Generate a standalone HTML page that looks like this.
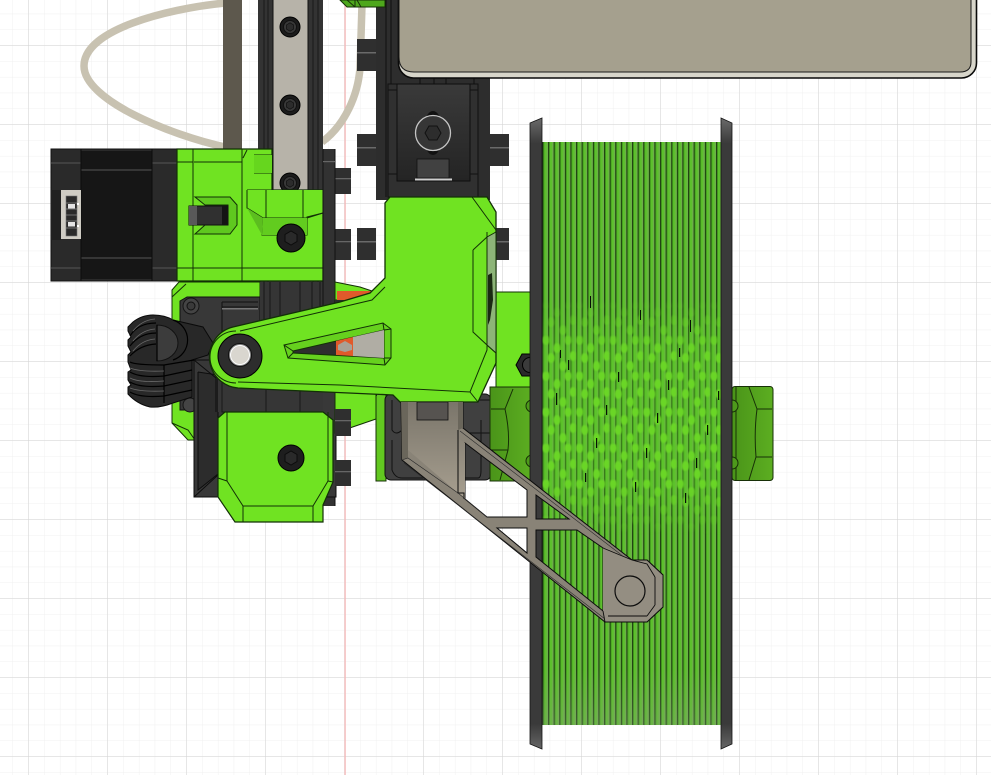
<!DOCTYPE html>
<html><head><meta charset="utf-8"><title>CAD view</title>
<style>html,body{margin:0;padding:0;background:#fff;width:991px;height:775px;overflow:hidden}svg{display:block}</style>
</head><body>
<svg xmlns="http://www.w3.org/2000/svg" width="991" height="775" viewBox="0 0 991 775">
<defs>
<pattern id="gm" x="28.3" y="45.3" width="15.8" height="15.8" patternUnits="userSpaceOnUse"><path d="M0 0H15.8M0 0V15.8" stroke="#f0f0f0" stroke-width="1" fill="none"/></pattern>
<pattern id="gM" x="28.3" y="45.3" width="79" height="79" patternUnits="userSpaceOnUse"><path d="M0 0H79M0 0V79" stroke="#d4d4d4" stroke-width="1" fill="none"/></pattern>
<pattern id="sp" x="542.5" y="0" width="5.6" height="10" patternUnits="userSpaceOnUse">
<rect width="5.6" height="10" fill="#6cb148"/><rect x="0" width=".8" height="10" fill="#0a1a04"/><rect x=".8" width="1" height="10" fill="#3a9018"/><rect x="1.8" width="2.2" height="10" fill="#5cc02c"/></pattern>
<pattern id="spots" x="542" y="300" width="33.6" height="36" patternUnits="userSpaceOnUse">
<g fill="#6ad626"><ellipse cx="4" cy="4" rx="3.6" ry="5"/><ellipse cx="15" cy="12" rx="3.6" ry="5"/><ellipse cx="26" cy="4" rx="3.6" ry="5"/><ellipse cx="9" cy="22" rx="3.6" ry="5"/><ellipse cx="21" cy="30" rx="3.6" ry="5"/><ellipse cx="31" cy="20" rx="3.4" ry="5"/></g></pattern>
<linearGradient id="fade" x1="0" y1="0" x2="0" y2="1"><stop offset="0" stop-color="#000"/><stop offset=".22" stop-color="#fff"/><stop offset=".78" stop-color="#fff"/><stop offset="1" stop-color="#000"/></linearGradient>
<mask id="mk"><rect x="542" y="300" width="180" height="235" fill="url(#fade)"/></mask>
<filter id="bl" x="-5%" y="-5%" width="110%" height="110%"><feGaussianBlur stdDeviation=".9"/></filter>
<linearGradient id="fl" x1="0" y1="0" x2="0" y2="1"><stop offset="0" stop-color="#6b6b6b"/><stop offset=".04" stop-color="#3a3a3a"/><stop offset=".96" stop-color="#3a3a3a"/><stop offset="1" stop-color="#666"/></linearGradient>
<linearGradient id="pl" x1="0" y1="0" x2="0" y2="1"><stop offset="0" stop-color="#7a756a"/><stop offset="1" stop-color="#a79f90"/></linearGradient>
<linearGradient id="kn" x1="0" y1="0" x2="1" y2="0"><stop offset="0" stop-color="#4a9419"/><stop offset="1" stop-color="#5cae21"/></linearGradient>
<linearGradient id="mt" x1="0" y1="0" x2="0" y2="1"><stop offset="0" stop-color="#3a3a3a"/><stop offset="1" stop-color="#242424"/></linearGradient>
<linearGradient id="sb" x1="0" y1="0" x2="0" y2="1"><stop offset="0" stop-color="#8a9a80" stop-opacity="0"/><stop offset="1" stop-color="#8a9a80" stop-opacity=".3"/></linearGradient>
<g id="bolt"><circle r="10" fill="#1c1c1c" stroke="#000"/><circle r="6.5" fill="#383838" stroke="#111"/><path d="M-3.6-2 0-4.2 3.6-2V2L0 4.2-3.6 2Z" fill="#2c2c2c" stroke="#111" stroke-width=".7"/></g>
<g id="tab"><rect width="19" height="32" fill="#2f2f2f"/><rect y="13" width="19" height="1.5" fill="#6a6a6a"/></g>
</defs>

<!-- grid -->
<rect width="991" height="775" fill="#fff"/>
<rect width="991" height="775" fill="url(#gm)"/>
<rect width="991" height="775" fill="url(#gM)"/>
<rect x="344.5" y="0" width="1.2" height="775" fill="#f6b4b4"/>

<!-- tubes -->
<g fill="none" stroke="#c8c2b1" stroke-width="7.500">
<path d="M225 3C165 9 84 30 84 66C84 100 170 135 225 147"/>
<path d="M322 142C345 125 358 95 360 68L362 5"/>
</g>

<!-- tan column -->
<rect x="223" y="0" width="19" height="150" fill="#5d584d"/>

<!-- linear rail -->
<rect x="258" y="0" width="65" height="285" fill="#333"/>
<path d="M264 0V285M268 0V285M273 0V190M308 0V190M313 0V285M318 0V285" stroke="#181818" stroke-width="1" fill="none"/>
<rect x="273" y="0" width="35" height="192" fill="#b7b3a9"/>
<path d="M273 0V192M308 0V192" stroke="#111" stroke-width="1"/>
<use href="#bolt" x="290" y="27"/><use href="#bolt" x="290" y="105"/><use href="#bolt" x="290" y="183"/>

<!-- column 2 -->
<rect x="376" y="0" width="114" height="200" fill="#2d2d2d"/>
<path d="M386 0V197M391 0V84M478 84V197" stroke="#0e0e0e" stroke-width="1" fill="none"/>
<rect x="388" y="84" width="90" height="113" fill="#303030" stroke="#111"/>
<rect x="397" y="84" width="73" height="97" fill="url(#mt)" stroke="#0e0e0e"/>
<path d="M388 90H397M470 90H478M388 174H397M470 174H478" stroke="#111" fill="none"/>
<ellipse cx="433" cy="133" rx="10" ry="22" fill="#111"/>
<circle cx="433" cy="133" r="17.500" fill="#363636" stroke="#c4c4c4" stroke-width="1.300"/>
<path d="M425 133 429 126H437L441 133 437 140H429Z" fill="#2d2d2d" stroke="#111"/>
<rect x="417" y="159" width="32" height="19" fill="#414141" stroke="#111" stroke-width=".8"/>
<rect x="415" y="178.500" width="37" height="2" fill="#cfcfcf"/>
<path d="M420 78V84M434 78V84M446 78V84M474 78V84" stroke="#0e0e0e"/>

<!-- top green fragment -->
<path d="M340 0 347 7H385V0Z" fill="#4ea71c" stroke="#173007"/>
<path d="M347 0 355 7M355 7V0M361 7 357 0" stroke="#173007" fill="none"/>

<!-- panel -->
<rect x="398.500" y="-30" width="578" height="108" rx="15" fill="#d7d5ca" stroke="#0a0a0a" stroke-width="1.600"/>
<path d="M399-30V57Q399 72 414 72H960Q971 72 971 62V-30Z" fill="#a5a08e" stroke="#1a1a1a" stroke-width="1"/>

<!-- tabs -->
<use href="#tab" x="357" y="39"/><use href="#tab" x="357" y="134"/><use href="#tab" x="357" y="228"/>
<use href="#tab" x="490" y="134"/><use href="#tab" x="490" y="228"/>
<rect x="335" y="168" width="16" height="26" fill="#2f2f2f"/><rect x="335" y="178" width="16" height="1.300" fill="#666"/>
<rect x="335" y="229" width="16" height="31" fill="#2f2f2f"/><rect x="335" y="241" width="16" height="1.300" fill="#666"/>

<!-- green right lower parts behind spool -->
<rect x="496" y="292" width="36" height="96" fill="#70e322" stroke="#123006"/>
<path d="M516 365 522 354H534V376H522Z" fill="#2a2a2a" stroke="#000"/>
<circle cx="530" cy="365" r="7.500" fill="#3b3b3b" stroke="#000"/>

<!-- lower dark block + knobs -->
<rect x="376" y="394" width="10" height="87" fill="#62c820" stroke="#173007"/>
<rect x="385" y="394" width="106" height="86" rx="6" fill="#404040" stroke="#111"/>
<path d="M392 400V430Q396 436 402 430M392 440V470Q395 478 402 478H478Q481 478 481 470V420M470 400H490M470 433H490" stroke="#111" fill="none"/>
<rect x="490" y="387" width="42" height="94" fill="url(#kn)" stroke="#173007"/>
<path d="M513 389 505 409Q510 432 508 450L500 480M491 409H505M491 450H508" stroke="#173007" fill="none"/>
<path d="M532 400a6 6 0 0 0 0 12M532 455a6 6 0 0 0 0 12" fill="#4d9a1b" stroke="#173007"/>

<rect x="732" y="386.500" width="41" height="94" rx="3" fill="url(#kn)" stroke="#173007"/>
<path d="M736 386V481M749 387 757 409Q754 432 756 457L749 480M757 409H772M756 457H772" stroke="#173007" fill="none"/>
<path d="M732 400a6 6 0 0 1 0 12M732 457a6 6 0 0 1 0 12" fill="#4d9a1b" stroke="#173007"/>

<!-- spool -->
<rect x="542" y="142" width="180" height="583" fill="url(#sp)"/>
<rect x="542" y="300" width="180" height="235" fill="#5ec82a" opacity=".4" mask="url(#mk)"/>
<rect x="542" y="300" width="180" height="235" fill="url(#spots)" mask="url(#mk)" filter="url(#bl)"/>
<rect x="542" y="670" width="180" height="55" fill="url(#sb)"/>
<g fill="#061004">
<rect x="568" y="360" width="1.200" height="10"/><rect x="556" y="393" width="1.200" height="12"/><rect x="606" y="405" width="1.200" height="10"/><rect x="618" y="372" width="1.200" height="10"/><rect x="668" y="380" width="1.200" height="10"/><rect x="657" y="413" width="1.200" height="10"/><rect x="646" y="448" width="1.200" height="10"/><rect x="596" y="438" width="1.200" height="10"/><rect x="585" y="473" width="1.200" height="9"/><rect x="635" y="482" width="1.200" height="10"/><rect x="685" y="493" width="1.200" height="10"/><rect x="696" y="458" width="1.200" height="10"/><rect x="707" y="425" width="1.200" height="10"/><rect x="718" y="391" width="1.200" height="9"/><rect x="679" y="348" width="1.200" height="9"/>
<rect x="590" y="296" width="1" height="12"/><rect x="640" y="310" width="1" height="10"/><rect x="690" y="320" width="1" height="12"/><rect x="560" y="350" width="1" height="8"/>
</g>
<g fill="url(#fl)" stroke="#151515" stroke-width=".8">
<path d="M530 123 542 118V749L530 744Z"/>
<path d="M721 118 732 123V744L721 749Z"/>
</g>

<!-- motor -->
<rect x="51" y="149" width="126" height="132" fill="#2a2a2a" stroke="#111"/>
<rect x="81" y="151" width="71" height="128" fill="#161616"/>
<path d="M51 163H81M152 163H177M51 268H81M152 268H177M81 170H152M81 258H152" stroke="#555" stroke-width=".9" fill="none"/>
<path d="M81 149V281M152 149V281" stroke="#0c0c0c"/>
<rect x="61" y="190" width="20" height="49" fill="#cfccc4"/>
<rect x="51" y="190" width="10" height="50" fill="#202020"/>
<rect x="66" y="196" width="11" height="40" fill="#2a2a2a" stroke="#777" stroke-width=".6"/>
<path d="M66 203H77M66 209H77M66 215H77M66 221H77M66 228H77" stroke="#888" stroke-width=".7"/>
<rect x="68" y="204" width="7" height="4.500" fill="#e4e4e4"/><rect x="68" y="222" width="7" height="4.500" fill="#e4e4e4"/>
<rect x="77" y="203" width="2" height="2" fill="#fff"/><rect x="77" y="225" width="2" height="2" fill="#fff"/>

<!-- upper-left green block -->
<path d="M177 149H272V190H323V281H177Z" fill="#70e322" stroke="#123006" stroke-width="1.200"/>
<path d="M193 149V281M242 149V281M177 162H193M177 268H323M194 162H242M247 190H323M243 158 247 150M254 155H272M254 173H272" stroke="#123006" fill="none"/>
<rect x="254" y="155" width="18" height="18" fill="#66d61e"/>
<path d="M247 190V208L263 218H307L323 213V190" fill="#70e322" stroke="#123006"/>
<path d="M266 190V218M303 190V218" stroke="#123006"/>
<path d="M247 208 263 218 262 235H277L307 235 307 217 323 213" fill="none" stroke="#123006"/>
<path d="M247 208 263 218 262 235Z" fill="#5cbe1f"/>
<path d="M263 218H307V235H262Z" fill="#62cc1f"/>
<circle cx="291" cy="238" r="14" fill="#1e1e1e" stroke="#000"/>
<path d="M285 234.500 291 231 297 234.500V241.500L291 245 285 241.500Z" fill="#2a2a2a" stroke="#0c0c0c"/>
<path d="M195 197H230L237 205V225L230 234H195L205 225H228V205H205Z" fill="#5fc81f" stroke="#123006"/>
<rect x="189" y="206" width="39" height="19" fill="#303030" stroke="#111"/>
<rect x="189" y="206" width="8" height="19" fill="#595959"/>
<rect x="222" y="206" width="6" height="19" fill="#141414"/>

<!-- carriage -->
<path d="M172 290 179 282H260V300H182V410H195V440H188L172 423Z" fill="#70e322" stroke="#123006"/>
<path d="M172 297 186 284M172 423 188 430 195 440" stroke="#123006" fill="none"/>
<path d="M180 301 187 297H260V412H194V410H180Z" fill="#383838" stroke="#111"/>
<path d="M222 302V412H258M222 302H258M222 307H258" stroke="#111" fill="none"/>
<rect x="222" y="308" width="36" height="1.500" fill="#777"/>
<circle cx="191" cy="306" r="8" fill="#444" stroke="#151515"/><circle cx="191" cy="306" r="4" fill="#3a3a3a" stroke="#111"/>
<circle cx="190" cy="405" r="7" fill="#444" stroke="#151515"/>

<!-- rail lower lines -->
<rect x="260" y="282" width="63" height="130" fill="#353535"/>
<path d="M264 282V412M270 282V412M280 282V412M300 282V412M312 282V412M320 282V412" stroke="#181818" fill="none"/>
<rect x="323" y="149" width="12" height="357" fill="#323232"/>
<path d="M323 149V506M335 149V506" stroke="#111" fill="none"/>
<rect x="323" y="161" width="12" height="1.200" fill="#666"/>
<rect x="194" y="360" width="142" height="137" fill="#383838" stroke="#0d0d0d"/>
<path d="M198 372V490L218 474V375L198 372" fill="#2c2c2c" stroke="#0d0d0d"/>
<path d="M194 360 216 378V412M194 497 218 475" stroke="#0d0d0d" fill="none"/>
<rect x="218" y="378" width="105" height="34" fill="#363636"/>
<path d="M222 378V412H323M266 378V412M300 378V412" stroke="#181818" fill="none"/>

<!-- right side green below arm + orange -->
<path d="M335 282 360 287 378 293V300H335Z" fill="#70e322" stroke="#123006"/>
<path d="M337 291 373 291 371 302 337 310Z" fill="#e05a2b"/>
<rect x="335" y="300" width="42" height="96" fill="#2b2b2b"/>
<path d="M335 390H376V419L335 433Z" fill="#70e322" stroke="#123006"/>

<!-- bottom tabs -->
<rect x="335" y="409" width="16" height="27" fill="#2f2f2f"/><rect x="335" y="420" width="16" height="1.300" fill="#666"/>
<rect x="335" y="460" width="16" height="26" fill="#2f2f2f"/><rect x="335" y="471" width="16" height="1.300" fill="#666"/>

<!-- bottom green block -->
<path d="M218 418 225 412H323L333 420V482L323 505V522H235L218 497Z" fill="#70e322" stroke="#123006" stroke-width="1.200"/>
<path d="M227 412V481L243 506V522M227 481 218 478M328 412V481L313 506V522M243 506H313M328 481 333 482" stroke="#123006" fill="none"/>
<circle cx="291" cy="458" r="13" fill="#1e1e1e" stroke="#000"/>
<path d="M285 454.500 291 451 297 454.500V461.500L291 465 285 461.500Z" fill="#2a2a2a" stroke="#0c0c0c"/>

<!-- clip -->
<path d="M128 327 133 322Q142 315 153 315 165 315 173 320L203 327 213 343 208 355 192 360V397L173 403Q160 408 150 407 137 404 128 394V387L131 385 128 380V372L131 370 128 362V355L131 352 128 346V340L131 337 128 331Z" fill="#282828" stroke="#0a0a0a"/>
<path d="M157 325A21 18 0 0 1 157 361Z" fill="#3c3c3c" stroke="#111"/>
<g fill="none" stroke="#000" stroke-width="1.200">
<path d="M130 336Q138 323 156 323M130 346Q140 333 156 333M130 356Q140 345 156 344"/>
<path d="M130 362Q135 365 164 365L194 360M130 372Q140 378 164 376L192 370M130 382Q140 388 164 386L192 380M130 392Q140 398 164 396L192 390"/>
<path d="M164 365V403"/>
<path d="M157 325V361M173 320A21 21 0 0 1 173 360"/>
</g>
<g fill="none" stroke="#6a6a6a" stroke-width=".8">
<path d="M130 368Q140 372 164 371M130 378Q140 383 164 381M130 388Q140 392 164 391"/>
<path d="M133 331Q142 320 155 319M133 341Q142 330 155 329M133 351Q142 340 155 339"/>
</g>

<!-- main arm -->
<path d="M233 327 340 302 370 293 385 278V203L390 197H487L496 212V363L478 402H400L393 395 238 388A31 31 0 0 1 233 327Z" fill="#70e322" stroke="#123006" stroke-width="1.300"/>
<path d="M240 331 372 300 385 287M238 382 340 385 470 392 487 350 487 232M472 197 496 230M473 250 487 237M473 250V332L487 345M487 345 496 353M470 392 478 402M236 331A26 26 0 0 0 236 383" fill="none" stroke="#123006"/>
<path d="M496 232 487 237V345L496 353Z" fill="#8db578" stroke="#123006"/>
<path d="M488 275 492 273 493 300 490 320 488 325Z" fill="#1a2a12"/>
<circle cx="240" cy="356" r="22" fill="#2d2d2d" stroke="#000"/>
<circle cx="240" cy="355" r="11.500" fill="#8a8a8a" stroke="#111"/>
<circle cx="240" cy="355" r="9.500" fill="#d9d6cf" stroke="#fff"/>

<!-- arm window -->
<path d="M284 345 383 323 391 329V358L385 365 288 358Z" fill="#66d11e" stroke="#123006"/>
<path d="M293 351 384 330V358L293 353Z" fill="#2e2e2e" stroke="#123006"/>
<path d="M336 341 353 337V356L336 355Z" fill="#e05a2b"/>
<path d="M353 337 384 330V358L353 356Z" fill="#b0ada4"/>
<path d="M338 345 345 341 352 345V350L345 352 338 350Z" fill="#a8a196"/>
<path d="M284 345 293 351M288 358 293 353M383 323 384 330M391 329 384 330M385 365 384 358M391 358 384 358" stroke="#123006" fill="none"/>

<!-- bracket -->
<path fill-rule="evenodd" fill="#898377" stroke="#0c0c0c" stroke-width="1" d="M401 402H463V428L632 560H647L663 575V607L647 622H605L402 460ZM465 443 527 490V517H487L465 499ZM536 495 569 519H536ZM497 528H527V553ZM536 530H577L603 548V611L536 557Z"/>
<path d="M408 402H458V438L465 443V499L463 497L458 493 408 450Z" fill="url(#pl)"/>
<path d="M401 402H408V458L402 460Z" fill="#6a665b"/>
<path d="M458 402H463V428L458 430Z" fill="#6a665b"/>
<path d="M458 430V493H464V499" fill="none" stroke="#0c0c0c"/>
<rect x="417" y="402" width="31" height="18" fill="#565350" stroke="#0f0f0f" stroke-width=".8"/>
<path d="M460 431 628 560M404 463 605 619M402 460 408 458 458 493M458 493 487 517" fill="none" stroke="#2a2a2a" stroke-width=".6"/>
<path d="M607 548 632 560H647L663 575V607L647 622H605L603 611V548Z" fill="#938d81"/>
<path d="M632 560H647L663 575V607L647 622H605L603 611M603 548 632 560M655 577V605M632 560 647 564 655 577M647 616 655 605M608 616H647" fill="none" stroke="#0c0c0c" stroke-width=".9"/>
<circle cx="630" cy="591" r="15" fill="#948e82" stroke="#0c0c0c" stroke-width="1.200"/>
</svg>
</body></html>
